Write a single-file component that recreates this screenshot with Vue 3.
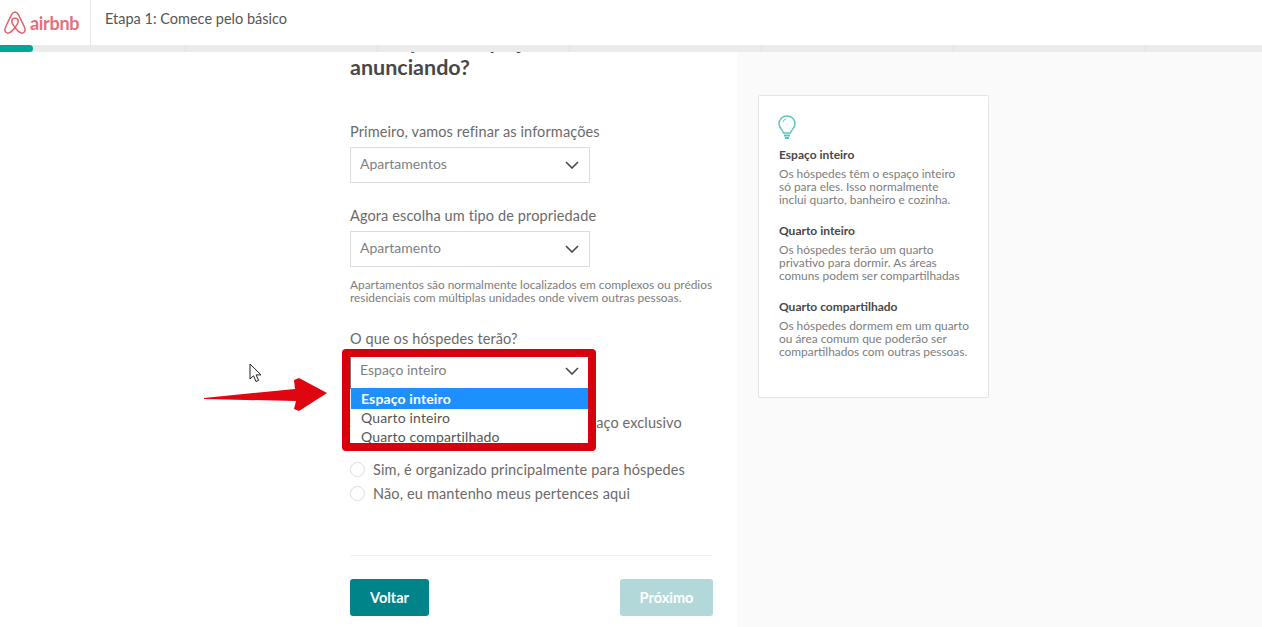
<script setup>
const segments = [0, 1, 2, 3, 4, 5]
const tips = [
  { title: 'Espaço inteiro', lines: ['Os hóspedes têm o espaço inteiro', 'só para eles. Isso normalmente', 'inclui quarto, banheiro e cozinha.'] },
  { title: 'Quarto inteiro', lines: ['Os hóspedes terão um quarto', 'privativo para dormir. As áreas', 'comuns podem ser compartilhadas'] },
  { title: 'Quarto compartilhado', lines: ['Os hóspedes dormem em um quarto', 'ou área comum que poderão ser', 'compartilhados com outras pessoas.'] },
]
</script>

<template>
  <div class="page">
    <header class="topbar">
      <div class="brand">
        <svg class="logo" viewBox="0 0 22 24" width="22" height="24" fill="none" stroke="#e2616b" stroke-width="1.5" stroke-linejoin="round">
          <path d="M11 16.5c-2-2.6-3.2-4.6-3.2-6.2 0-1.8 1.4-3 3.2-3s3.2 1.2 3.2 3c0 1.6-1.2 3.6-3.2 6.2z" />
          <path d="M11 16.5c-2.6 3.4-4.4 5.3-6.5 5.6C2.4 22.4.9 20.700.9 18.800c0-1.200.4-2.300 1-3.600C3.600 11.500 5.800 7 7.800 3.300 8.700 1.700 9.600.9 11 .9s2.300.8 3.200 2.400c2 3.700 4.200 8.200 5.900 11.900.6 1.300 1 2.400 1 3.600 0 1.900-1.500 3.600-3.600 3.300-2.100-.3-3.900-2.200-6.500-5.600z" />
        </svg>
        <span class="wordmark">airbnb</span>
      </div>
      <div class="step">Etapa 1: Comece pelo básico</div>
    </header>

    <div class="progress">
      <div class="progress-fill"></div>
      <i v-for="s in segments" :key="s" class="tick"></i>
    </div>

    <div class="content">
      <main class="form">
        <h1 class="heading">Que tipo de espaço você está<br />anunciando?</h1>

        <label class="label first">Primeiro, vamos refinar as informações</label>
        <div class="select">
          <span>Apartamentos</span>
          <svg class="chev" viewBox="0 0 14 8" width="14" height="8"><path d="M1 1l6 6 6-6" fill="none" stroke="#484848" stroke-width="1.6" /></svg>
        </div>

        <label class="label second">Agora escolha um tipo de propriedade</label>
        <div class="select">
          <span>Apartamento</span>
          <svg class="chev" viewBox="0 0 14 8" width="14" height="8"><path d="M1 1l6 6 6-6" fill="none" stroke="#484848" stroke-width="1.6" /></svg>
        </div>
        <p class="help">Apartamentos são normalmente localizados em complexos ou prédios<br />residenciais com múltiplas unidades onde vivem outras pessoas.</p>

        <label class="label third">O que os hóspedes terão?</label>
        <div class="select-wrap">
          <div class="select open">
            <span>Espaço inteiro</span>
            <svg class="chev" viewBox="0 0 14 8" width="14" height="8"><path d="M1 1l6 6 6-6" fill="none" stroke="#484848" stroke-width="1.6" /></svg>
          </div>
          <div class="menu">
            <div class="option active">Espaço inteiro</div>
            <div class="option">Quarto inteiro</div>
            <div class="option">Quarto compartilhado</div>
          </div>
          <div class="highlight"></div>
        </div>

        <label class="label fourth">Seu anúncio foi configurado como espaço exclusivo</label>
        <div class="radio first-radio"><i></i><span>Sim, é organizado principalmente para hóspedes</span></div>
        <div class="radio"><i></i><span>Não, eu mantenho meus pertences aqui</span></div>

        <hr class="rule" />
        <div class="actions">
          <button class="btn back" type="button">Voltar</button>
          <button class="btn next" type="button">Próximo</button>
        </div>
      </main>

      <div class="side">
        <aside class="tips">
          <svg class="bulb" viewBox="0 0 18 25" width="18" height="25" fill="none" stroke="#5cc6bd" stroke-width="1.5">
            <path d="M5.500 18c0-2.500-4.500-4.500-4.500-9.200C1 4.400 4.500 1 9 1s8 3.400 8 7.800c0 4.700-4.500 6.700-4.500 9.200z" />
            <path d="M5 7c.4-1.500 1.400-2.500 3-3" stroke-width="1" />
            <path d="M6 20.500h6M7 23h4" stroke-width="2" />
          </svg>
          <section v-for="t in tips" :key="t.title" class="tip">
            <h3>{{ t.title }}</h3>
            <p v-for="l in t.lines" :key="l">{{ l }}</p>
          </section>
        </aside>
      </div>
    </div>

    <svg class="arrow" viewBox="0 0 124 34" width="124" height="34">
      <path d="M0 20L91 11 90 2 95 0 123 15 95 33 90 31 92 23 0 21z" fill="#e0060f" />
    </svg>
    <svg class="cursor" viewBox="0 0 14 20" width="14" height="20">
      <path d="M1 1v15l3.500-3.200 2.500 5.700 2.600-1.100-2.500-5.500H12z" fill="#fff" stroke="#222" stroke-width="1" stroke-linejoin="round" />
    </svg>
  </div>
</template>

<style>
html, body { margin: 0; background: #fff; overflow: hidden; }
</style>

<style scoped>
.page {
  position: relative;
  width: 1262px;
  height: 627px;
  overflow: hidden;
  font-family: Lato, "Liberation Sans", sans-serif;
  color: #484848;
  display: flex;
  flex-direction: column;
}
.topbar {
  height: 45px;
  display: flex;
  align-items: stretch;
  flex: none;
}
.brand {
  border-right: 1px solid #e8e8e8;
  display: flex;
  align-items: center;
  gap: 4px;
  padding-left: 4px;
  box-sizing: border-box;
  width: 91px;
}
.logo { margin-top: 1px; }
.wordmark {
  color: #e4707a;
  font-size: 18px;
  font-weight: 700;
  letter-spacing: -0.3px;
  margin-top: 1px;
}
.step {
  margin-left: 14px;
  line-height: 38px;
  font-size: 14.5px;
  color: #555;
}
.progress {
  height: 7px;
  flex: none;
  background: #ebebeb;
  display: flex;
  position: relative;
  padding-left: 185px;
}
.progress-fill {
  position: absolute;
  left: 0;
  top: 0;
  bottom: 0;
  width: 33px;
  background: #00a699;
  border-radius: 0 4px 4px 0;
}
.tick {
  width: 192px;
  border-left: 1px solid #e0e0e0;
  box-sizing: border-box;
  flex: none;
}
.content {
  flex: 1;
  display: flex;
  min-height: 0;
}
.form {
  width: 737px;
  box-sizing: border-box;
  padding: 0 24px 0 350px;
  overflow: hidden;
  flex: none;
}
.heading {
  margin: -24px 0 0;
  font-size: 21.5px;
  line-height: 26px;
  font-weight: 700;
  color: #484848;
}
.label {
  display: block;
  font-size: 14.5px;
  line-height: 20px;
  letter-spacing: 0.12px;
  color: #6a6a6a;
}
.first { margin-top: 42px; }
.second { margin-top: 23px; }
.third { margin-top: 25px; }
.fourth { margin-top: 24px; }
.select {
  margin-top: 5px;
  width: 240px;
  height: 36px;
  box-sizing: border-box;
  border: 1px solid #dcdcdc;
  display: flex;
  align-items: center;
  justify-content: space-between;
  padding: 0 10px 0 9px;
  font-size: 14px;
  line-height: 16px;
  color: #808080;
  background: #fff;
}
.select > span { margin-top: -2px; }
.chev { flex: none; }
.help {
  margin: 11px 0 0;
  font-size: 11.9px;
  line-height: 13px;
  color: #7d7d7d;
  white-space: nowrap;
}
.select-wrap {
  position: relative;
  margin-top: 4px;
  height: 36px;
}
.select-wrap .select { margin-top: 0; border-color: #777; }
.menu {
  position: absolute;
  z-index: 2;
  left: 1px;
  top: 35px;
  width: 237px;
  height: 55px;
  overflow: hidden;
  background: #fff;
  font-size: 14px;
  letter-spacing: 0.15px;
}
.option {
  height: 19px;
  line-height: 18px;
  padding-left: 10px;
  color: #555;
}
.option.active {
  height: 21px;
  line-height: 21px;
  background: #1e8fff;
  color: #fff;
  font-weight: 700;
}
.highlight {
  position: absolute;
  z-index: 3;
  left: -8px;
  top: -4px;
  width: 254px;
  height: 102px;
  box-sizing: border-box;
  border: 8px solid #d9000d;
  border-radius: 4px;
  pointer-events: none;
}
.radio {
  display: flex;
  align-items: center;
  gap: 8px;
  height: 24px;
  font-size: 14.5px;
  letter-spacing: 0.15px;
  color: #6a6a6a;
}
.first-radio { margin-top: 24px; }
.radio i {
  width: 13px;
  height: 13px;
  border: 1px solid #dcdcdc;
  border-radius: 50%;
  flex: none;
}
.rule {
  margin: 50px 0 0;
  border: 0;
  border-top: 1px solid #f0f0f0;
}
.actions {
  display: flex;
  justify-content: space-between;
  margin-top: 23px;
}
.btn {
  height: 37px;
  border: 0;
  border-radius: 3px;
  color: #fff;
  font: 700 14.5px Lato, "Liberation Sans", sans-serif;
}
.back { width: 79px; background: #008489; }
.next { width: 93px; background: #b2d8da; }
.side {
  flex: 1;
  background: #fafafa;
  padding: 43px 0 0 21px;
}
.tips {
  width: 231px;
  height: 303px;
  box-sizing: border-box;
  background: #fff;
  border: 1px solid #e4e4e4;
  border-radius: 2px;
  padding: 19px 20px;
}
.bulb { display: block; margin-left: -1px; }
.tip { margin-bottom: 18px; }
.tip:first-of-type { margin-top: 8px; }
.tip h3 {
  margin: 0 0 6px;
  font-size: 12px;
  line-height: 13px;
  font-weight: 700;
  color: #484848;
}
.tip p {
  margin: 0;
  font-size: 11.9px;
  line-height: 13px;
  color: #7d7d7d;
  white-space: nowrap;
}
.arrow { position: absolute; left: 204px; top: 378px; }
.cursor { position: absolute; left: 249px; top: 363px; }
</style>
